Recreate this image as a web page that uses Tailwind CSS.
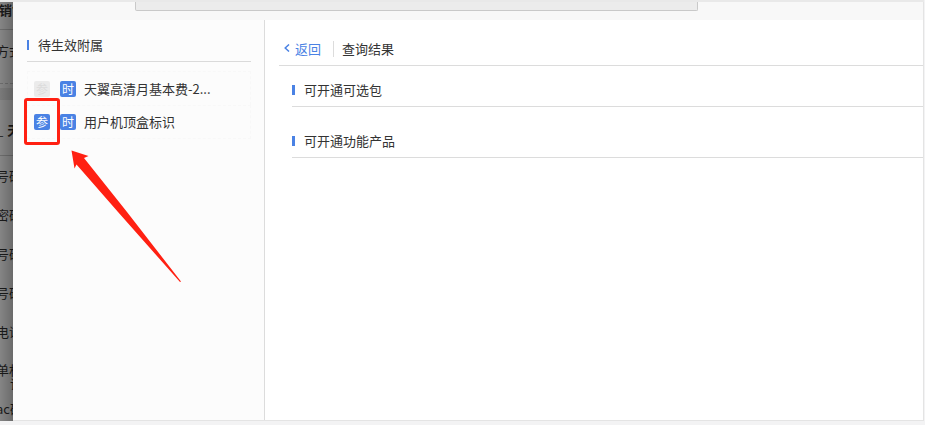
<!DOCTYPE html>
<html lang="zh-CN">
<head>
    <meta charset="UTF-8">
    <meta name="viewport" content="width=device-width, initial-scale=1.0">
    <title>待生效附属</title>
    <script src="https://cdn.jsdelivr.net/npm/@tailwindcss/browser@4"></script>
</head>
<body class="h-screen overflow-hidden bg-[#f3f3f4] pb-1 pr-px font-['Noto_Sans_CJK_SC',sans-serif] text-[13px] leading-5 text-[#333]">

    <div class="relative flex h-full border-t-2 border-[#e9e9e9]">

        <!-- Dimmed page behind the dialog -->
        <div class="relative w-[13px] shrink-0 overflow-hidden whitespace-nowrap bg-[#858585] text-[#1a1a1a]">
            <div class="-ml-px h-7 border-b border-[#6c6c6c] font-bold leading-4">销售</div>
            <div class="flex h-[54px] items-center border-b border-dashed border-[#6c6c6c] pb-3"><span class="-ml-1">方式</span></div>
            <div class="mt-1 h-3 bg-[#7a7a7a]"></div>
            <div class="flex h-14 items-center gap-1 border-b border-[#6c6c6c] pt-1"><span class="-ml-1">_</span><span class="font-bold">天</span></div>
            <div class="-ml-1">
                <div class="flex h-[39px] items-center">号码</div>
                <div class="flex h-[39px] items-center">密码</div>
                <div class="flex h-[39px] items-center">号码</div>
                <div class="flex h-[39px] items-center">号码</div>
                <div class="flex h-[39px] items-center">电话</div>
                <div class="pt-3 leading-[14px]">
                    <p>单机</p>
                    <p class="pl-3.5">证</p>
                </div>
                <div class="mt-2">ac码</div>
            </div>
            <div class="absolute inset-0 bg-linear-to-r from-transparent to-black/20"></div>
        </div>

        <!-- Dialog -->
        <div class="flex min-w-0 flex-1 flex-col border-b border-r border-[#e4e4e4] bg-white">
            <div class="h-[18px] shrink-0 bg-[#f8f8f8] pl-[122px]">
                <div class="h-[9px] w-[563px] rounded-b-xs border border-t-0 border-[#c9c9c9] bg-[#ececec]"></div>
            </div>

            <div class="flex min-h-0 flex-1">
                <aside class="w-[252px] shrink-0 border-r border-[#dcdcdc] bg-[#fcfcfc] px-[13px] pl-3.5">
                    <h2 class="flex h-[42px] items-center gap-[9px] border-b border-[#dadada] pt-2">
                        <span class="h-2.5 w-0.5 bg-[#4a82e4]"></span>待生效附属
                    </h2>
                    <ul class="mt-[9px]">
                        <li class="flex h-[34px] items-center border border-b-0 border-dashed border-[#f8f8f8] pl-1.5">
                            <button disabled class="size-4 rounded-xs bg-[#ebebeb] text-xs leading-4 text-[#dcdcdc]">参</button>
                            <button class="ml-2.5 size-4 rounded-xs bg-[#4a82e4] text-xs leading-4 text-white">时</button>
                            <span class="ml-2">天翼高清月基本费-2...</span>
                        </li>
                        <li class="flex h-[34px] items-center border border-dashed border-[#f8f8f8] pl-1.5">
                            <button class="size-4 rounded-xs bg-[#4a82e4] text-xs leading-4 text-white">参</button>
                            <button class="ml-2.5 size-4 rounded-xs bg-[#4a82e4] text-xs leading-4 text-white">时</button>
                            <span class="ml-2">用户机顶盒标识</span>
                        </li>
                    </ul>
                </aside>

                <main class="min-w-0 flex-1 pl-3.5">
                    <div class="flex h-[46px] items-center border-b border-[#dcdcdc] pl-1 pt-3">
                        <a href="#" class="flex items-center gap-1 text-[#4a82e4]">
                            <svg class="mb-0.5 h-2 w-2" viewBox="0 0 8 8" fill="none" stroke="currentColor" stroke-width="1.5"><path d="M6 .5 2.200 4 6 7.500"/></svg>
                            返回
                        </a>
                        <span class="ml-3 h-4 border-l border-[#dcdcdc]"></span>
                        <span class="ml-2">查询结果</span>
                    </div>
                    <div class="pl-[13px]">
                        <h3 class="flex h-[41px] items-center gap-[9px] border-b border-[#dcdcdc] pt-2">
                            <span class="h-2.5 w-[3px] bg-[#4a82e4]"></span>可开通可选包
                        </h3>
                        <h3 class="mt-2.5 flex h-[41px] items-center gap-[9px] border-b border-[#dcdcdc] pt-2">
                            <span class="h-2.5 w-[3px] bg-[#4a82e4]"></span>可开通功能产品
                        </h3>
                    </div>
                </main>
            </div>
        </div>

        <!-- Highlight box and arrow -->
        <div class="absolute left-6 top-24 h-[47px] w-9 rounded-[3px] border-3 border-[#ff2012]"></div>
        <svg class="absolute left-[70px] top-[148px] h-[134px] w-28" viewBox="0 0 112 134" fill="#ff2012">
            <path d="M1.500 .5 18.500 6 14 8 57 62 111 131.500 110 132 48 62 6.500 14.500 4.500 18.500Z"/>
        </svg>
    </div>

</body>
</html>
